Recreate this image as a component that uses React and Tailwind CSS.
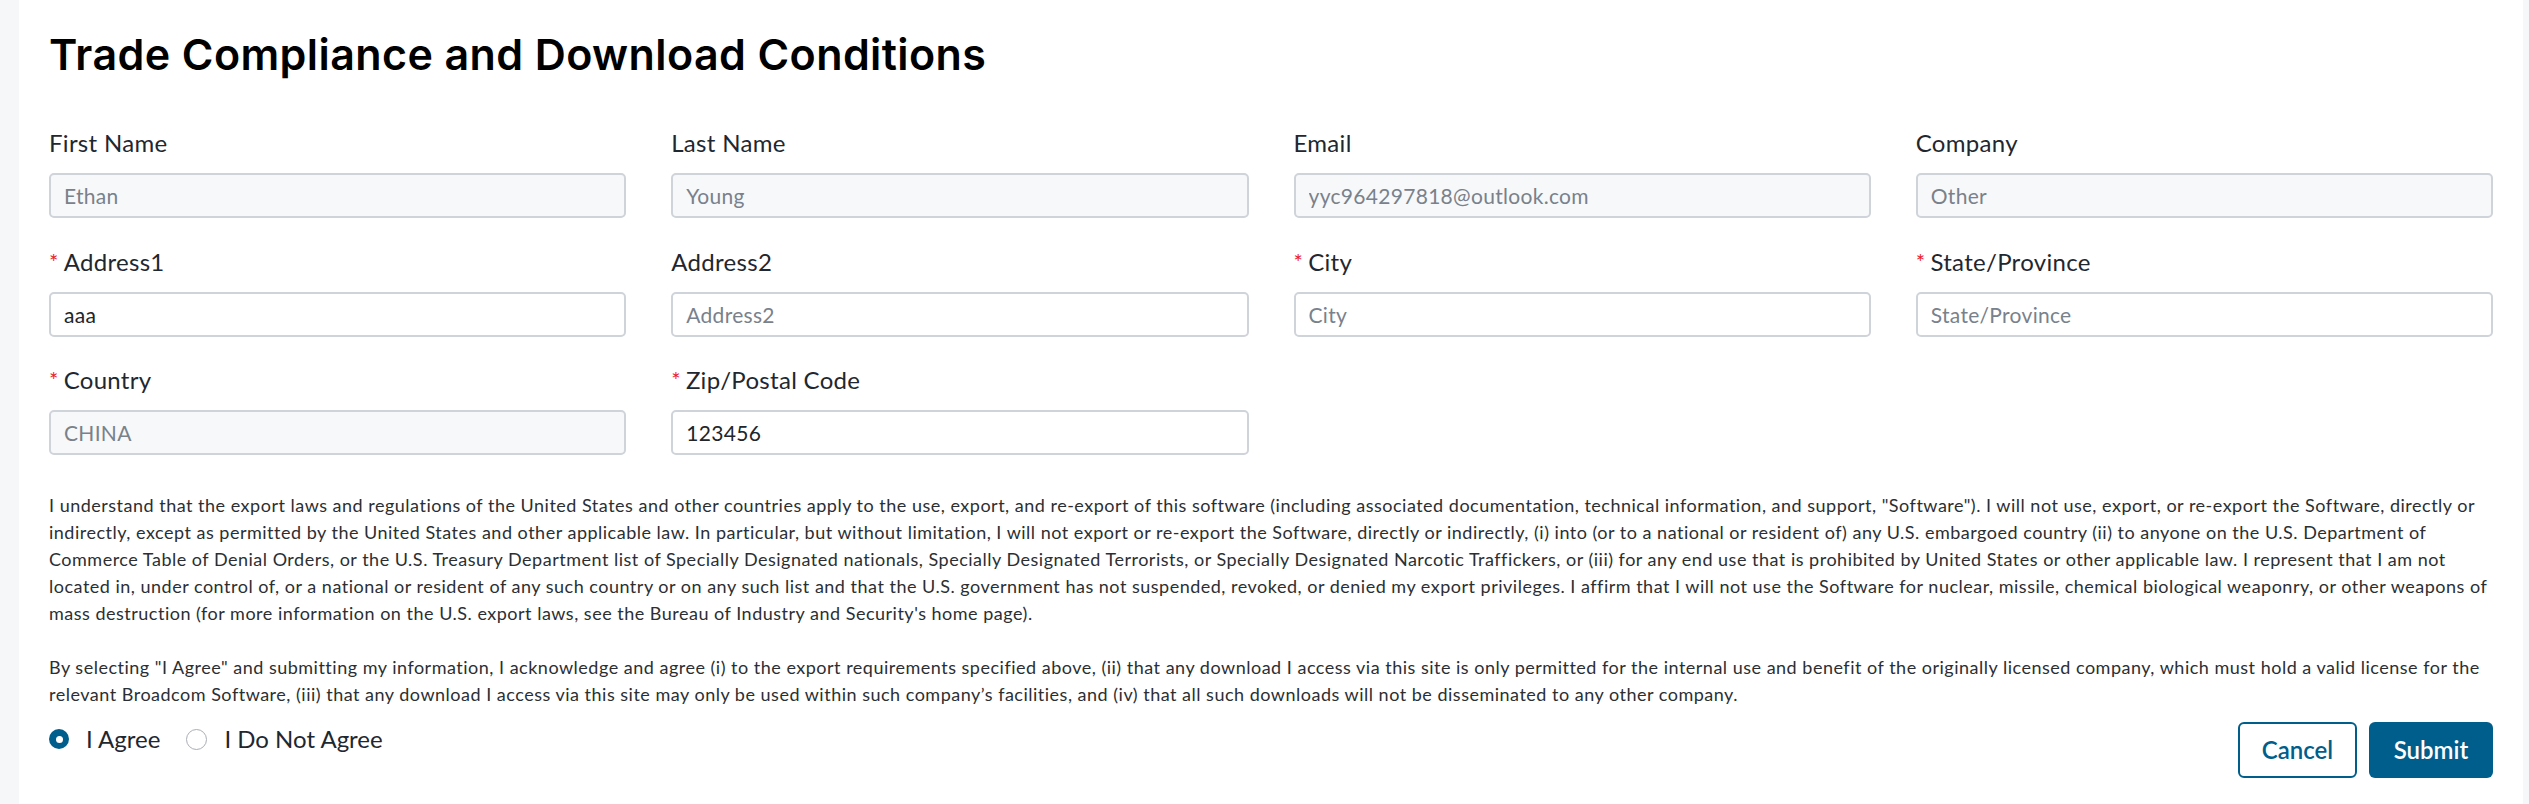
import React from "react";

const body = { fontFamily: "Lato, 'Noto Sans', sans-serif" };

function Field({ label, required, value, placeholder, disabled }) {
  return (
    <div className="flex flex-col">
      <label className="text-[24px] leading-[29px] tracking-[0.3px] text-[#1f2730] whitespace-nowrap">
        {required && <span className="text-[#e8221b] text-[22px] align-top mr-[5px]">*</span>}
        {label}
      </label>
      <input
        readOnly
        disabled={disabled}
        defaultValue={value}
        placeholder={placeholder}
        style={body}
        className={
          "mt-[16px] h-[45px] w-full rounded-[5px] border-2 border-[#cfd4da] px-[13px] text-[21px] tracking-[0.3px] outline-none placeholder:text-[#79818b] " +
          (disabled ? "bg-[#f7f8fa] text-[#79818b]" : "bg-white text-[#212529]")
        }
      />
    </div>
  );
}

function Radio({ checked, onClick, children }) {
  return (
    <button onClick={onClick} className="flex items-center gap-[17px]">
      {checked ? (
        <span className="flex h-[20px] w-[20px] items-center justify-center rounded-full bg-[#005e8c]">
          <span className="h-[7px] w-[7px] rounded-full bg-white" />
        </span>
      ) : (
        <span className="h-[21px] w-[21px] rounded-full border border-[#a9aeb3] bg-white" />
      )}
      {children}
    </button>
  );
}

export default function App() {
  const [agree, setAgree] = React.useState(true);

  return (
    <div className="min-h-[804px] bg-[#f6f7f8] pl-[19px] pr-[6px]" style={body}>
      <div className="min-h-[804px] bg-white px-[30px] pt-[28px]">
        <h1
          className="text-[43px] leading-[53px] font-semibold text-black tracking-[0.4px]"
          style={{ fontFamily: "Inter, 'Open Sans', sans-serif" }}
        >
          Trade Compliance and Download Conditions
        </h1>

        <div className="mt-[47px] grid grid-cols-4 gap-x-[45px] gap-y-[28.5px]">
          <Field label="First Name" value="Ethan" disabled />
          <Field label="Last Name" value="Young" disabled />
          <Field label="Email" value="yyc964297818@outlook.com" disabled />
          <Field label="Company" value="Other" disabled />
          <Field label="Address1" required value="aaa" />
          <Field label="Address2" placeholder="Address2" />
          <Field label="City" required placeholder="City" />
          <Field label="State/Province" required placeholder="State/Province" />
          <Field label="Country" required value="CHINA" disabled />
          <Field label="Zip/Postal Code" required value="123456" />
        </div>

        <p className="mt-[37px] text-[18px] leading-[27px] tracking-[0.5px] text-[#2b2f33]">
          I understand that the export laws and regulations of the United States and other countries apply to the use, export, and re-export of this software (including associated documentation, technical information, and support, "Software"). I will not use, export, or re-export the Software, directly or indirectly, except as permitted by the United States and other applicable law. In particular, but without limitation, I will not export or re-export the Software, directly or indirectly, (i) into (or to a national or resident of) any U.S. embargoed country (ii) to anyone on the U.S. Department of Commerce Table of Denial Orders, or the U.S. Treasury Department list of Specially Designated nationals, Specially Designated Terrorists, or Specially Designated Narcotic Traffickers, or (iii) for any end use that is prohibited by United States or other applicable law. I represent that I am not located in, under control of, or a national or resident of any such country or on any such list and that the U.S. government has not suspended, revoked, or denied my export privileges. I affirm that I will not use the Software for nuclear, missile, chemical biological weaponry, or other weapons of mass destruction (for more information on the U.S. export laws, see the Bureau of Industry and Security's home page).
        </p>

        <p className="mt-[27px] text-[18px] leading-[27px] tracking-[0.5px] text-[#2b2f33]">
          By selecting "I Agree" and submitting my information, I acknowledge and agree (i) to the export requirements specified above, (ii) that any download I access via this site is only permitted for the internal use and benefit of the originally licensed company, which must hold a valid license for the relevant Broadcom Software, (iii) that any download I access via this site may only be used within such company’s facilities, and (iv) that all such downloads will not be disseminated to any other company.
        </p>

        <div className="mt-[14px] flex items-start justify-between">
          <div className="flex items-center gap-[26px] text-[24px] leading-[34px] text-[#1f2730]">
            <Radio checked={agree} onClick={() => setAgree(true)}>I Agree</Radio>
            <Radio checked={!agree} onClick={() => setAgree(false)}>I Do Not Agree</Radio>
          </div>
          <div className="flex gap-[12px]">
            <button className="h-[56px] w-[119px] rounded-[6px] border-2 border-[#005e8c] bg-white text-[24px] font-semibold text-[#005e8c]">
              Cancel
            </button>
            <button className="h-[56px] w-[124px] rounded-[6px] bg-[#005e8c] text-[24px] font-semibold text-white">
              Submit
            </button>
          </div>
        </div>
      </div>
    </div>
  );
}
